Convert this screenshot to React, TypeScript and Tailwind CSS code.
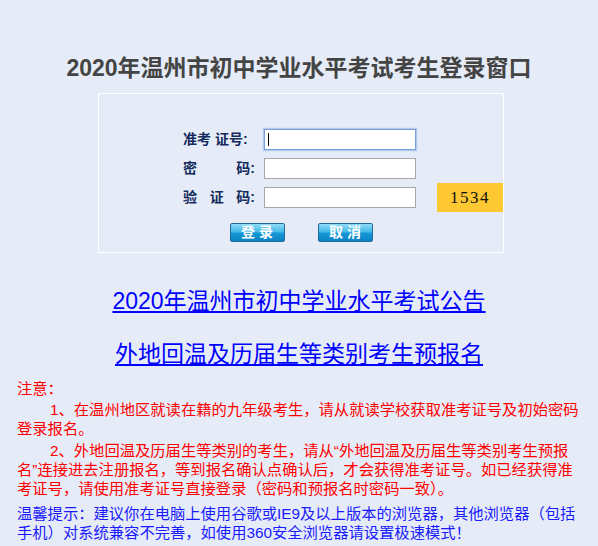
import React from 'react';

const Row = ({ label, focused, extra }: { label: React.ReactNode; focused?: boolean; extra?: React.ReactNode }) => (
  <div className="flex items-center h-[21px]">
    <div className="w-[72px] flex justify-between text-[14px] leading-[21px] font-bold text-[#142b5e]">{label}</div>
    <div className="relative ml-[9px]">
      <input
        type="text"
        className={`block w-[152px] h-[21px] bg-white outline-none border ${focused ? 'border-[#7a9fdc] shadow-[0_0_1px_1px_#b3c8ee]' : 'border-[#a8a8a8]'}`}
      />
      {focused && <span className="absolute left-[4px] top-[4px] w-px h-[13px] bg-black"></span>}
    </div>
    {extra}
  </div>
);

const App = () => {
  return (
    <div className="min-h-[546px] bg-[#e6ecf7] pt-[53px] font-['Liberation_Sans','Noto_Sans_CJK_SC',sans-serif]">
      <h1 className="text-center text-[23px] leading-[30px] font-bold text-[#444444]">
        2020年温州市初中学业水平考试考生登录窗口
      </h1>

      {/* login box */}
      <div className="ml-[98px] mt-[10px] w-[406px] h-[160px] border border-white pt-[35px]">
        <div className="ml-[84px] flex flex-col gap-[8px]">
          <Row label={<span>准考 证号:</span>} focused />
          <Row label={<><span>密</span><span>码:</span></>} />
          <Row
            label={<><span>验</span><span>证</span><span>码:</span></>}
            extra={
              <div className="ml-[21px] w-[66px] h-[29px] -my-[4px] bg-[#fec832] flex items-center justify-center font-['Liberation_Serif',serif] text-[17px] tracking-[1.5px] text-[#111]">
                1534
              </div>
            }
          />
        </div>

        <div className="mt-[15px] flex justify-center gap-[33px]">
          {['登 录', '取 消'].map(t => (
            <button
              key={t}
              className="w-[55px] h-[19px] rounded-[2px] border border-[#1f6b99] bg-[linear-gradient(to_bottom,#8fdcf7_0%,#45b9e8_45%,#1597d6_55%,#0b83c4_100%)] text-white font-bold text-[14px] leading-[17px] whitespace-pre"
            >
              {t}
            </button>
          ))}
        </div>
      </div>

      {/* links */}
      <div className="mt-[33px] flex flex-col items-center">
        <a href="#" className="text-[23px] leading-[30px] text-[#0000ff] underline">
          2020年温州市初中学业水平考试公告
        </a>
        <a href="#" className="mt-[23px] text-[23px] leading-[30px] text-[#0000ff] underline">
          外地回温及历届生等类别考生预报名
        </a>
      </div>

      {/* notes */}
      <div className="mt-[10px] ml-[17px] w-[563px] text-[15.3px] leading-[19px] text-[#ff0000]">
        <p>注意：</p>
        <p className="mt-[2px] indent-[33px]">
          1、在温州地区就读在籍的九年级考生，请从就读学校获取准考证号及初始密码登录报名。
        </p>
        <p className="mt-[3px] indent-[33px]">
          2、外地回温及历届生等类别的考生，请从“外地回温及历届生等类别考生预报名”连接进去注册报名，等到报名确认点确认后，才会获得准考证号。如已经获得准考证号，请使用准考证号直接登录（密码和预报名时密码一致）。
        </p>
        <p className="mt-[6px] text-[#1a1aff]">
          温馨提示：建议你在电脑上使用谷歌或IE9及以上版本的浏览器，其他浏览器（包括手机）对系统兼容不完善，如使用360安全浏览器请设置极速模式！
        </p>
      </div>
    </div>
  );
};

export default App;
